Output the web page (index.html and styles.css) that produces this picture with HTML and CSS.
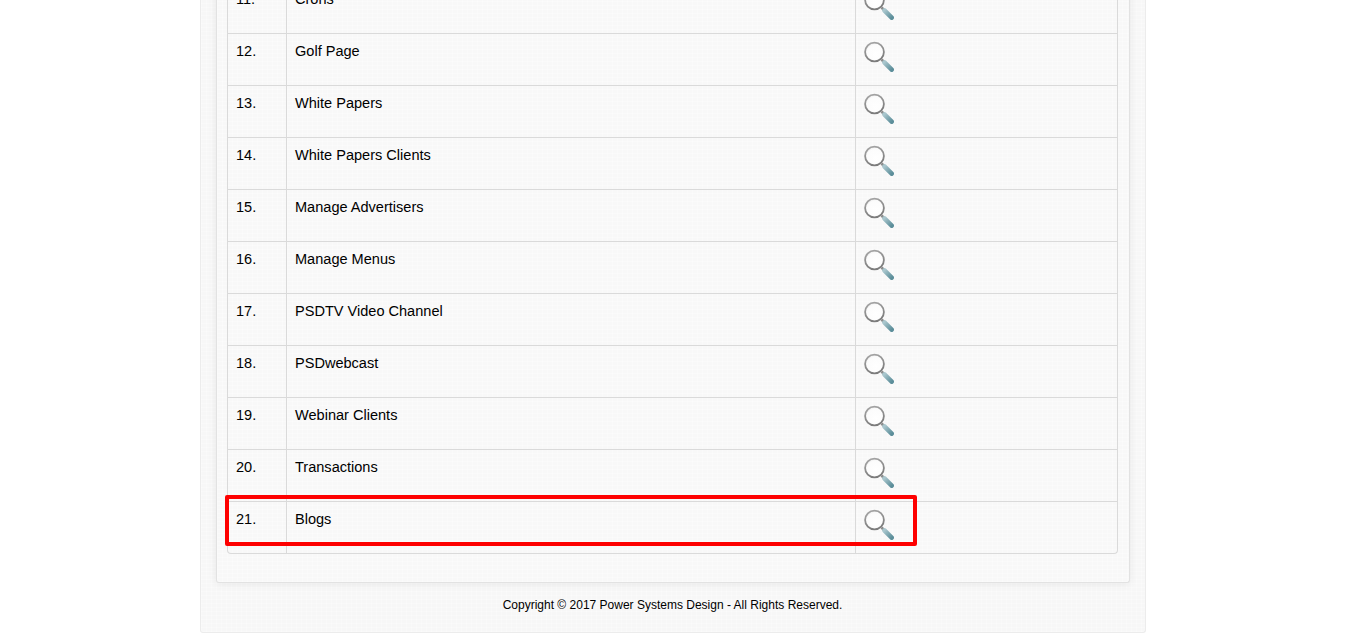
FILE: index.html
```html
<!DOCTYPE html>
<html lang="en">
<head>
<meta charset="utf-8">
<title>Manage Modules</title>
<link rel="stylesheet" href="styles.css">
</head>
<body>
<svg class="defs" width="0" height="0" aria-hidden="true">
  <defs>
    <linearGradient id="handle" x1="0" y1="0" x2="1" y2="1">
      <stop offset="0" stop-color="#a9c6cd"/>
      <stop offset="1" stop-color="#5c8e9a"/>
    </linearGradient>
    <linearGradient id="ring" x1="0" y1="0" x2="0.3" y2="1">
      <stop offset="0" stop-color="#a8a8a8"/>
      <stop offset="1" stop-color="#7c7c7c"/>
    </linearGradient>
    <radialGradient id="glass" cx="0.58" cy="0.62" r="0.72">
      <stop offset="0" stop-color="#ffffff"/>
      <stop offset="0.7" stop-color="#fcfcfc"/>
      <stop offset="1" stop-color="#dedede"/>
    </radialGradient>
    <symbol id="mag" viewBox="0 0 30 31">
      <line x1="17.500" y1="18.500" x2="20.500" y2="21.500" stroke="#8a8a8a" stroke-width="2.600"/>
      <line x1="20.500" y1="21.500" x2="27.700" y2="28.700" stroke="url(#handle)" stroke-width="4.600" stroke-linecap="round"/>
      <circle cx="10.500" cy="11" r="9.400" fill="url(#glass)" stroke="url(#ring)" stroke-width="1.800"/>
    </symbol>
  </defs>
</svg>
<div class="wrapper">
  <div class="panel">
    <table class="list">
      <tbody>
        <tr><td class="num">11.</td><td class="name">Crons</td><td class="act"><svg class="icon"><use href="#mag"/></svg></td></tr>
        <tr><td class="num">12.</td><td class="name">Golf Page</td><td class="act"><svg class="icon"><use href="#mag"/></svg></td></tr>
        <tr><td class="num">13.</td><td class="name">White Papers</td><td class="act"><svg class="icon"><use href="#mag"/></svg></td></tr>
        <tr><td class="num">14.</td><td class="name">White Papers Clients</td><td class="act"><svg class="icon"><use href="#mag"/></svg></td></tr>
        <tr><td class="num">15.</td><td class="name">Manage Advertisers</td><td class="act"><svg class="icon"><use href="#mag"/></svg></td></tr>
        <tr><td class="num">16.</td><td class="name">Manage Menus</td><td class="act"><svg class="icon"><use href="#mag"/></svg></td></tr>
        <tr><td class="num">17.</td><td class="name">PSDTV Video Channel</td><td class="act"><svg class="icon"><use href="#mag"/></svg></td></tr>
        <tr><td class="num">18.</td><td class="name">PSDwebcast</td><td class="act"><svg class="icon"><use href="#mag"/></svg></td></tr>
        <tr><td class="num">19.</td><td class="name">Webinar Clients</td><td class="act"><svg class="icon"><use href="#mag"/></svg></td></tr>
        <tr><td class="num">20.</td><td class="name">Transactions</td><td class="act"><svg class="icon"><use href="#mag"/></svg></td></tr>
        <tr><td class="num">21.</td><td class="name">Blogs</td><td class="act"><svg class="icon"><use href="#mag"/></svg></td></tr>
      </tbody>
    </table>
    <div class="highlight"></div>
  </div>
  <p class="copyright">Copyright © 2017 Power Systems Design - All Rights Reserved.</p>
</div>
</body>
</html>
```
FILE: styles.css
```css
html, body {
  margin: 0;
  padding: 0;
  height: 638px;
  overflow: hidden;
  background: #fff;
  font-family: "Liberation Sans", Arial, sans-serif;
  color: #000;
}
.defs {
  display: block;
  height: 0;
}
.wrapper {
  box-sizing: border-box;
  width: 946px;
  margin: -60px 0 0 200px;
  padding: 0 15px;
  height: 693px;
  border: 1px solid #ececec;
  border-top: 0;
  border-radius: 0 0 3px 3px;
  background-color: #f7f7f7;
  background-image:
    repeating-linear-gradient(0deg, rgba(255,255,255,.3) 0 1px, transparent 1px 4px),
    repeating-linear-gradient(90deg, rgba(255,255,255,.3) 0 1px, transparent 1px 5px);
}
.panel {
  position: relative;
  box-sizing: border-box;
  width: 914px;
  height: 643px;
  padding: 42px 11px 0 10px;
  border: 1px solid #e2e2e2;
  border-top: 0;
  border-radius: 0 0 3px 3px;
  box-shadow: 0 1px 8px rgba(0,0,0,.07);
  background-color: #f8f8f8;
  background-image:
    repeating-linear-gradient(0deg, rgba(255,255,255,.3) 0 1px, transparent 1px 4px),
    repeating-linear-gradient(90deg, rgba(255,255,255,.3) 0 1px, transparent 1px 5px);
}
.list {
  width: 891px;
  table-layout: fixed;
  border-collapse: separate;
  border-spacing: 0;
  border: 1px solid #dadada;
  border-top: 0;
  border-radius: 0 0 4px 4px;
  font-size: 14.56px;
  line-height: 20px;
}
.list td {
  box-sizing: border-box;
  height: 52px;
  padding: 7px 8px 8px;
  vertical-align: top;
  border-bottom: 1px solid #dadada;
}
.list tr:last-child td {
  border-bottom: 0;
  height: 51px;
}
.num {
  width: 59px;
  border-right: 1px solid #dadada;
}
.name {
  width: 569px;
  border-right: 1px solid #dadada;
}
.list .act {
  padding-bottom: 0;
}
.icon {
  display: block;
  width: 30px;
  height: 31px;
}
.highlight {
  position: absolute;
  left: 8px;
  top: 555px;
  width: 684px;
  height: 43px;
  border: 4px solid #fe0000;
  border-radius: 2px;
}
.copyright {
  margin: 15px 1px 0 0;
  font-size: 12px;
  line-height: 14px;
  text-align: center;
}
```
